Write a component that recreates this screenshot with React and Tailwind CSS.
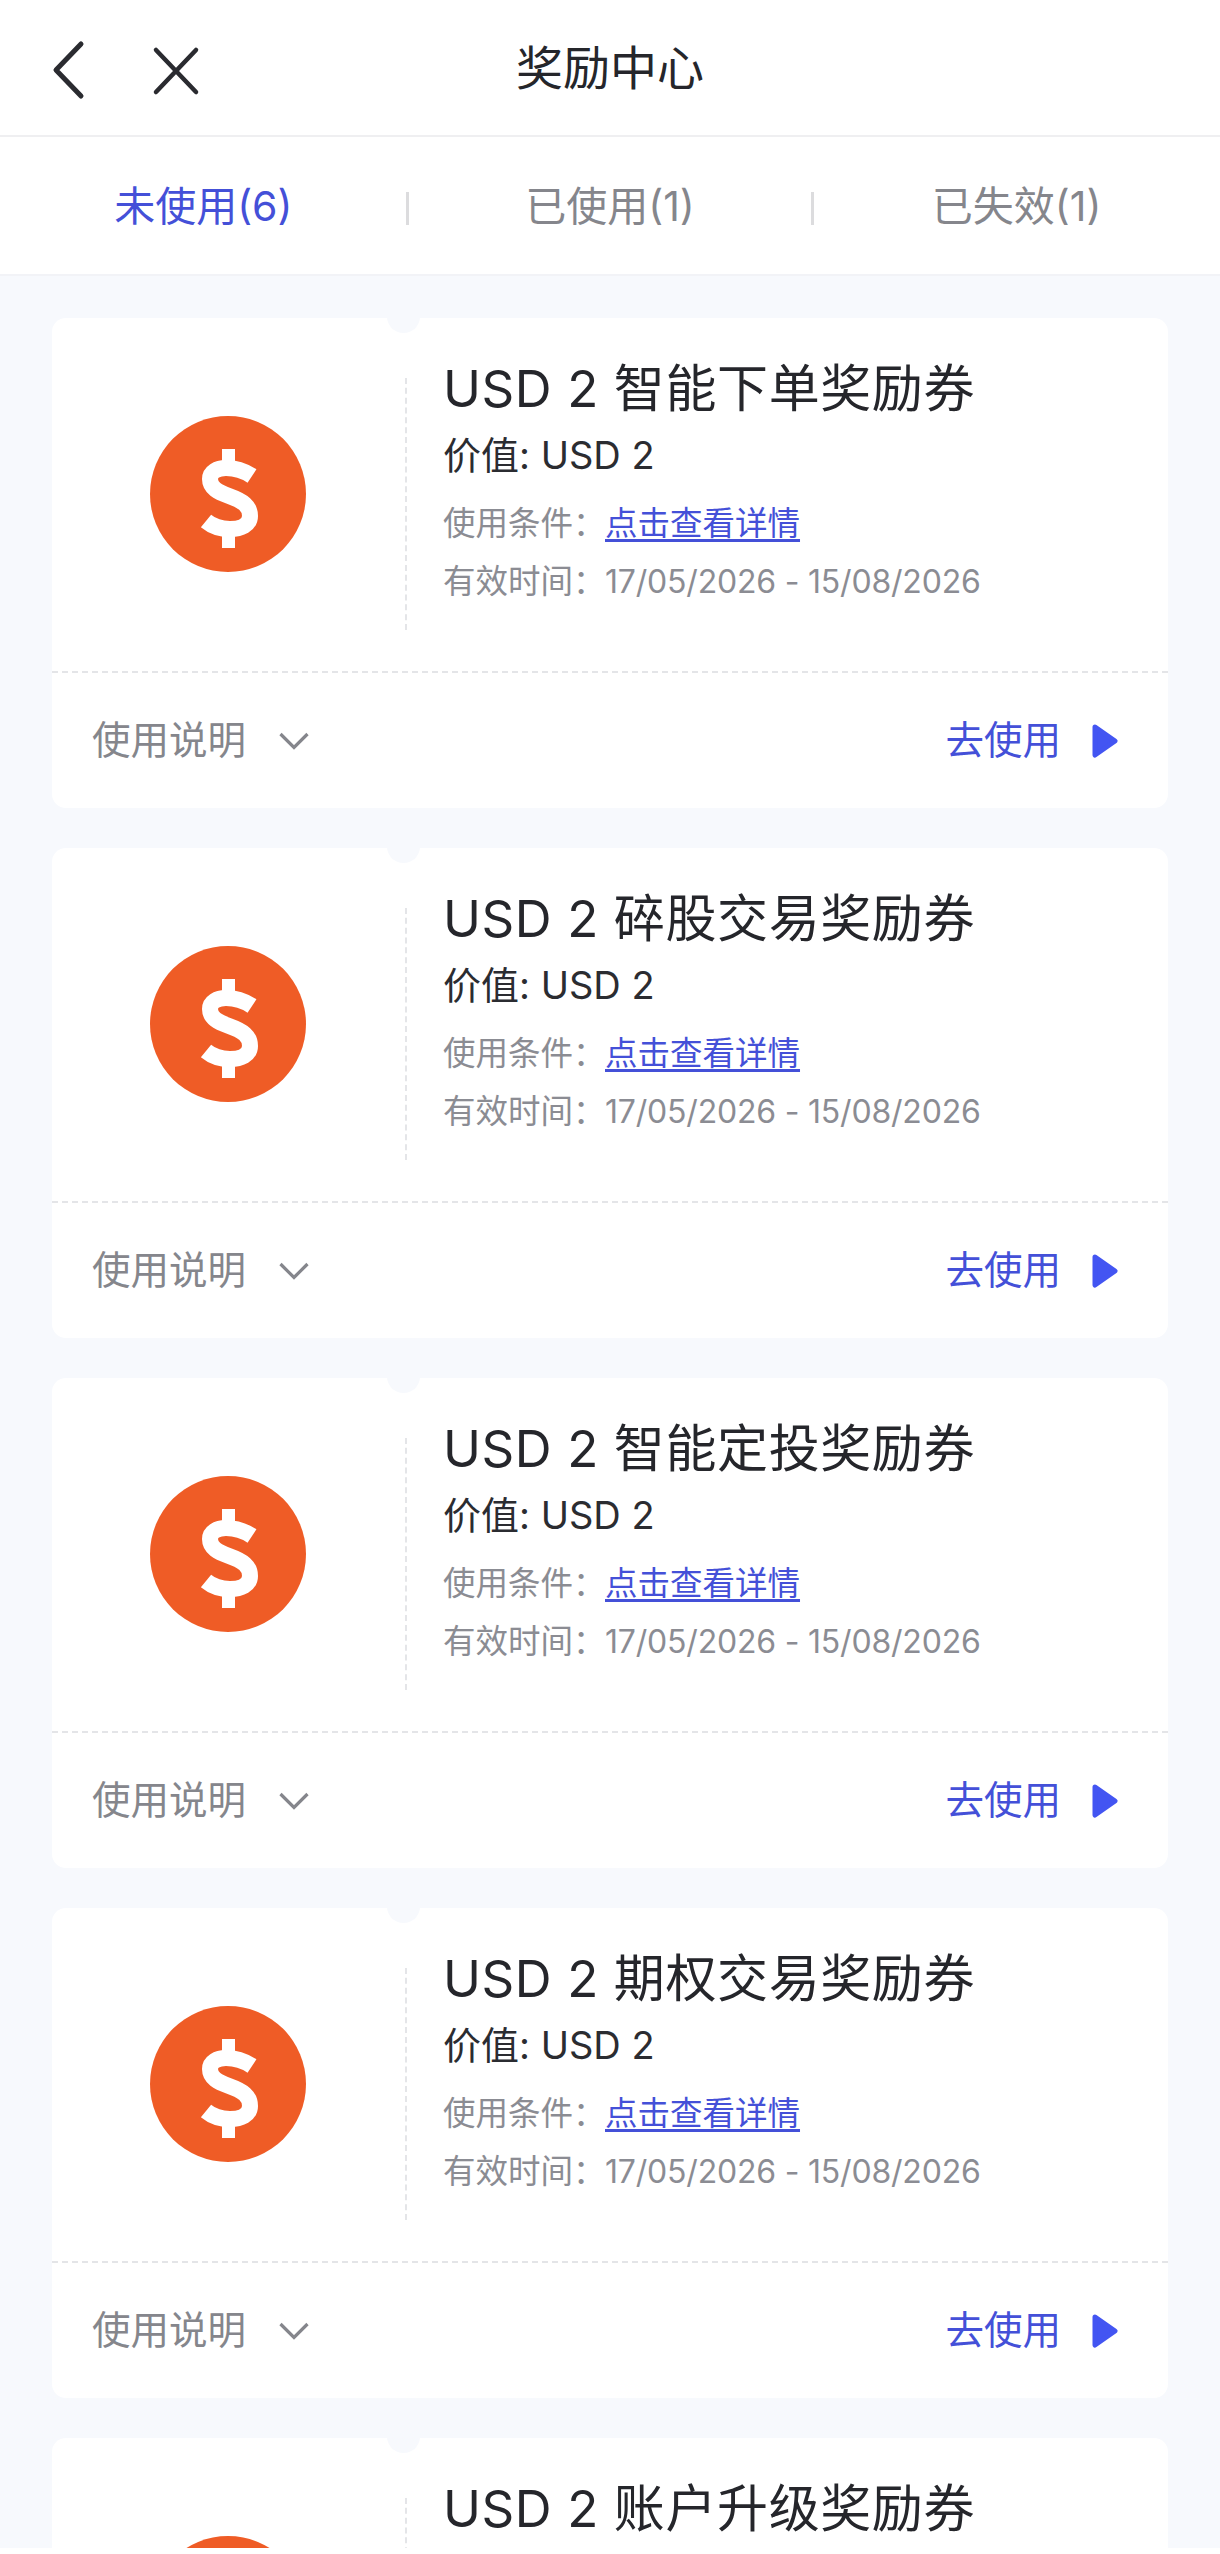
import React from "react";

const FONT = "font-['Inter','Noto_Sans_CJK_SC',sans-serif]";

const coupons = [
  "USD 2 智能下单奖励券",
  "USD 2 碎股交易奖励券",
  "USD 2 智能定投奖励券",
  "USD 2 期权交易奖励券",
  "USD 2 账户升级奖励券",
];

const DollarIcon = () => (
  <svg width="156" height="156" viewBox="0 0 156 156">
    <circle cx="78" cy="78" r="78" fill="#ef5c26" />
    <path d="M72 33h13v18H72zM72 114h13v18H72z" fill="#fff" />
    <path
      d="M102 60C93 54 85 52 76 52C67 52 60 56 60 63C60 72 68 76 79 80C93 85 100 90 100 100C100 109 91 113 80 113C71 113 62 110 56 105"
      fill="none"
      stroke="#fff"
      strokeWidth="16"
    />
  </svg>
);

const CouponCard = ({ title }) => (
  <div className="relative shrink-0 h-[490px] rounded-[14px] bg-white flex flex-col">
    {/* ticket notch */}
    <div className="absolute left-[335px] top-[-18px] w-[33px] h-[33px] rounded-full bg-[#f7f9fd]" />
    <div className="h-[353px] flex">
      <div className="w-[353px] shrink-0 flex items-center justify-center pr-[2px] pb-[2px]">
        <DollarIcon />
      </div>
      <div className="mt-[60px] h-[252px] border-l-2 border-dashed border-[#e4e5e8]" />
      <div className="ml-[36px] pt-[38px]">
        <div className="h-[64px] leading-[64px] text-[51px] tracking-[0.6px] text-[#25262b] whitespace-nowrap relative top-[1px]">{title}</div>
        <div className="mt-[10px] h-[48px] leading-[48px] text-[38px] text-[#2b2c31] relative top-[1px]">价值: USD 2</div>
        <div className="mt-[25px] h-[40px] leading-[40px] text-[32.5px] text-[#8b8c93] flex whitespace-nowrap relative top-[1px]">
          <span className="w-[162px] shrink-0">使用条件：</span>
          <span className="text-[#4450d8] underline underline-offset-[4px]">点击查看详情</span>
        </div>
        <div className="mt-[19px] h-[40px] leading-[40px] text-[32.5px] text-[#8b8c93] flex whitespace-nowrap">
          <span className="w-[162px] shrink-0">有效时间：</span>
          <span className="text-[32px] tracking-[-0.2px]">17/05/2026 - 15/08/2026</span>
        </div>
      </div>
    </div>
    <div className="flex-1 border-t-2 border-dashed border-[#e4e5e8] pl-[40px] pr-[50px] flex items-center justify-between">
      <div className="flex items-center gap-[33px] text-[38.5px] text-[#85868c]">
        <span>使用说明</span>
        <svg width="30" height="18" viewBox="0 0 30 18" fill="none">
          <path d="M1.5 2L15 15.5L28.5 2" stroke="#85868c" strokeWidth="3.2" />
        </svg>
      </div>
      <div className="flex items-center gap-[31px] text-[38.5px] text-[#4450d8]">
        <span>去使用</span>
        <svg width="26" height="34" viewBox="0 0 26 34">
          <path d="M3 3L23 17L3 31Z" fill="#4355f2" stroke="#4355f2" strokeWidth="5" strokeLinejoin="round" />
        </svg>
      </div>
    </div>
  </div>
);

const Tab = ({ label, active }) => (
  <div className={`flex items-center justify-center text-[41px] ${active ? "text-[#4450d8]" : "text-[#85868c]"}`}>
    {label}
  </div>
);

export default function App() {
  return (
    <div className={`${FONT} w-[1220px] h-[2554px] overflow-hidden bg-white flex flex-col`}>
      {/* Nav bar */}
      <div className="h-[137px] shrink-0 border-b-2 border-[#efeff1] relative flex items-center justify-center">
        <div className="absolute left-[50px] top-[40px] flex items-start gap-[66px]">
          <svg width="36" height="60" viewBox="0 0 36 60" fill="none">
            <path d="M31 4L6 30L31 56" stroke="#2a2b30" strokeWidth="5" strokeLinecap="round" strokeLinejoin="round" />
          </svg>
          <svg width="50" height="50" viewBox="0 0 50 50" fill="none" className="mt-[6px]">
            <path d="M4 4L44 46M44 4L4 46" stroke="#2a2b30" strokeWidth="4.5" strokeLinecap="round" />
          </svg>
        </div>
        <span className="text-[47px] text-[#25262b] mt-[1px]">奖励中心</span>
      </div>

      {/* Tabs */}
      <div className="h-[139px] shrink-0 relative grid grid-cols-3 pt-[2px] border-b-2 border-[#f2f3f7]">
        <Tab label="未使用(6)" active />
        <Tab label="已使用(1)" />
        <Tab label="已失效(1)" />
        <div className="absolute left-[406px] top-[55px] w-[3px] h-[33px] bg-[#dcdcde]" />
        <div className="absolute left-[811px] top-[55px] w-[3px] h-[33px] bg-[#dcdcde]" />
      </div>

      {/* Coupon list */}
      <div className="h-[2272px] shrink-0 overflow-hidden bg-[#f7f9fd] px-[52px] pt-[42px] flex flex-col gap-[40px]">
        {coupons.map((title) => (
          <CouponCard key={title} title={title} />
        ))}
      </div>
    </div>
  );
}
